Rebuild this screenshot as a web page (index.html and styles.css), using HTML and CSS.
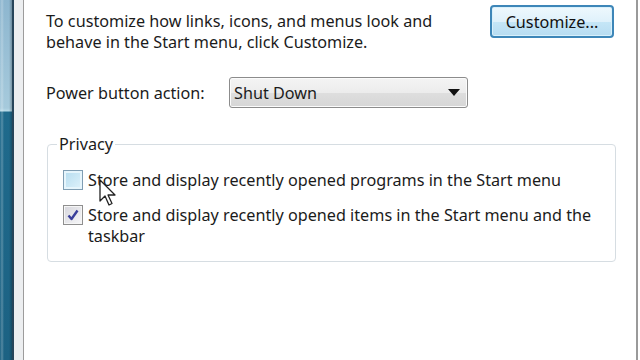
FILE: index.html
```html
<!DOCTYPE html>
<html>
<head>
<meta charset="utf-8">
<link rel="stylesheet" href="styles.css">
</head>
<body>
<div class="screen">
  <div class="desk"></div>
  <div class="frame"></div>
  <div class="page">
    <div class="row-top">
      <p class="intro">To customize how links, icons, and menus look and behave in the Start menu, click Customize.</p>
      <button class="btn">Customize...</button>
    </div>
    <div class="row-power">
      <span class="label">Power button action:</span>
      <div class="select">
        <span>Shut Down</span>
        <svg class="arrow" width="12" height="7" viewBox="0 0 12 7"><path d="M0 0H12L6 7Z" fill="#111"/></svg>
      </div>
    </div>
    <fieldset class="group">
      <legend>Privacy</legend>
      <label class="check">
        <span class="box hover"></span>
        <span class="ctext">Store and display recently opened programs in the Start menu</span>
      </label>
      <label class="check">
        <span class="box checked"><svg width="14" height="14" viewBox="0 0 14 14"><path d="M2.5 7.5 L5.5 11 L11.5 2.5" fill="none" stroke="#3a3f9a" stroke-width="2.4" stroke-linejoin="round"/></svg></span>
        <span class="ctext">Store and display recently opened items in the Start menu and the taskbar</span>
      </label>
    </fieldset>
  </div>
  <div class="outer"></div>
  <svg class="cursor" width="20" height="30" viewBox="0 0 20 30"><path d="M1 1 L1 22 L6 17 L10 26 L13 24.5 L9 16 L16 16 Z" fill="#fff" stroke="#222" stroke-width="1.3" stroke-linejoin="round"/></svg>
</div>
</body>
</html>
```
FILE: styles.css
```css
html, body {
  margin: 0;
  padding: 0;
  background: #ffffff;
}
.screen {
  position: relative;
  width: 640px;
  height: 360px;
  display: flex;
  overflow: hidden;
  font-family: "Noto Sans", "Open Sans", sans-serif;
  font-size: 16.2px;
  color: #1b1b1b;
}
.desk {
  width: 12px;
  flex: none;
  background:
    linear-gradient(to right, rgba(255,255,255,0) 0, rgba(255,255,255,0.25) 2px, rgba(255,255,255,0) 4px, rgba(0,0,0,0) 9px, rgba(0,0,0,0.25) 12px),
    linear-gradient(to bottom, #8db6cf 0, #a6cadc 108px, #b8dae8 111px, #1f6a8c 112px, #1c6283 100%);
}
.frame {
  width: 9px;
  flex: none;
  border-left: 2px solid #27455a;
  border-right: 1px solid #9c9c9c;
  background: #eceef0;
}
.page {
  box-sizing: border-box;
  width: 614px;
  flex: none;
  padding: 5px 22px 0 22px;
  border-right: 2px solid #9a9a9a;
  background: #fff;
}
.outer {
  flex: 1;
  background: #fff;
}
.row-top {
  display: flex;
  justify-content: space-between;
  align-items: flex-start;
}
.intro {
  margin: 6px 0 0;
  width: 400px;
  line-height: 21px;
}
.btn {
  width: 124px;
  height: 33px;
  margin: 0;
  padding: 0;
  font: inherit;
  color: #111;
  border: 2px solid #3d86b8;
  border-radius: 4px;
  background: linear-gradient(to bottom, #eef8fd 0, #dff1fb 50%, #c5e6f7 51%, #b7dcf1 100%);
  box-shadow: inset 0 0 0 1px #d8f0fb;
}
.row-power {
  display: flex;
  align-items: center;
  margin-top: 24px;
}
.label {
  width: 183px;
}
.select {
  box-sizing: border-box;
  width: 239px;
  height: 31px;
  border: 1px solid #8c8c8c;
  border-radius: 3px;
  background: linear-gradient(to bottom, #f4f4f4 0, #ececec 50%, #dedede 51%, #d6d6d6 100%);
  box-shadow: inset 0 0 0 1px #fbfbfb;
  display: flex;
  align-items: center;
  justify-content: space-between;
  padding: 0 7px 0 4px;
}
.arrow {
  display: block;
}
.group {
  min-width: 0;
  margin: 26px -2px 0 1px;
  padding: 16px 16px 14px 15px;
  border: 1px solid #d6dde2;
  border-radius: 4px;
}
.group legend {
  padding: 0 2px;
  margin-left: -6px;
  line-height: 20px;
}
.check {
  display: flex;
  align-items: flex-start;
  gap: 5px;
  line-height: 21px;
  margin-bottom: 14px;
}
.check:last-child {
  margin-bottom: 0;
}
.box {
  flex: none;
  width: 20px;
  height: 20px;
  border: 1px solid #8f8f8f;
  box-sizing: border-box;
  display: flex;
  align-items: center;
  justify-content: center;
  background: linear-gradient(135deg, #dcdcdc, #fbfbfb);
  box-shadow: inset 0 0 0 1px #f6f6f6;
}
.box.hover {
  border-color: #7f9db3;
  background: linear-gradient(135deg, #b5dcef, #dff2fb);
  box-shadow: inset 0 0 0 2px #e6f5fc;
}
.box.checked {
  background: linear-gradient(135deg, #d6d6dc, #f7f7f9);
}
.ctext {
  flex: 1;
  min-width: 0;
}
.cursor {
  position: absolute;
  left: 99px;
  top: 179px;
}
```
